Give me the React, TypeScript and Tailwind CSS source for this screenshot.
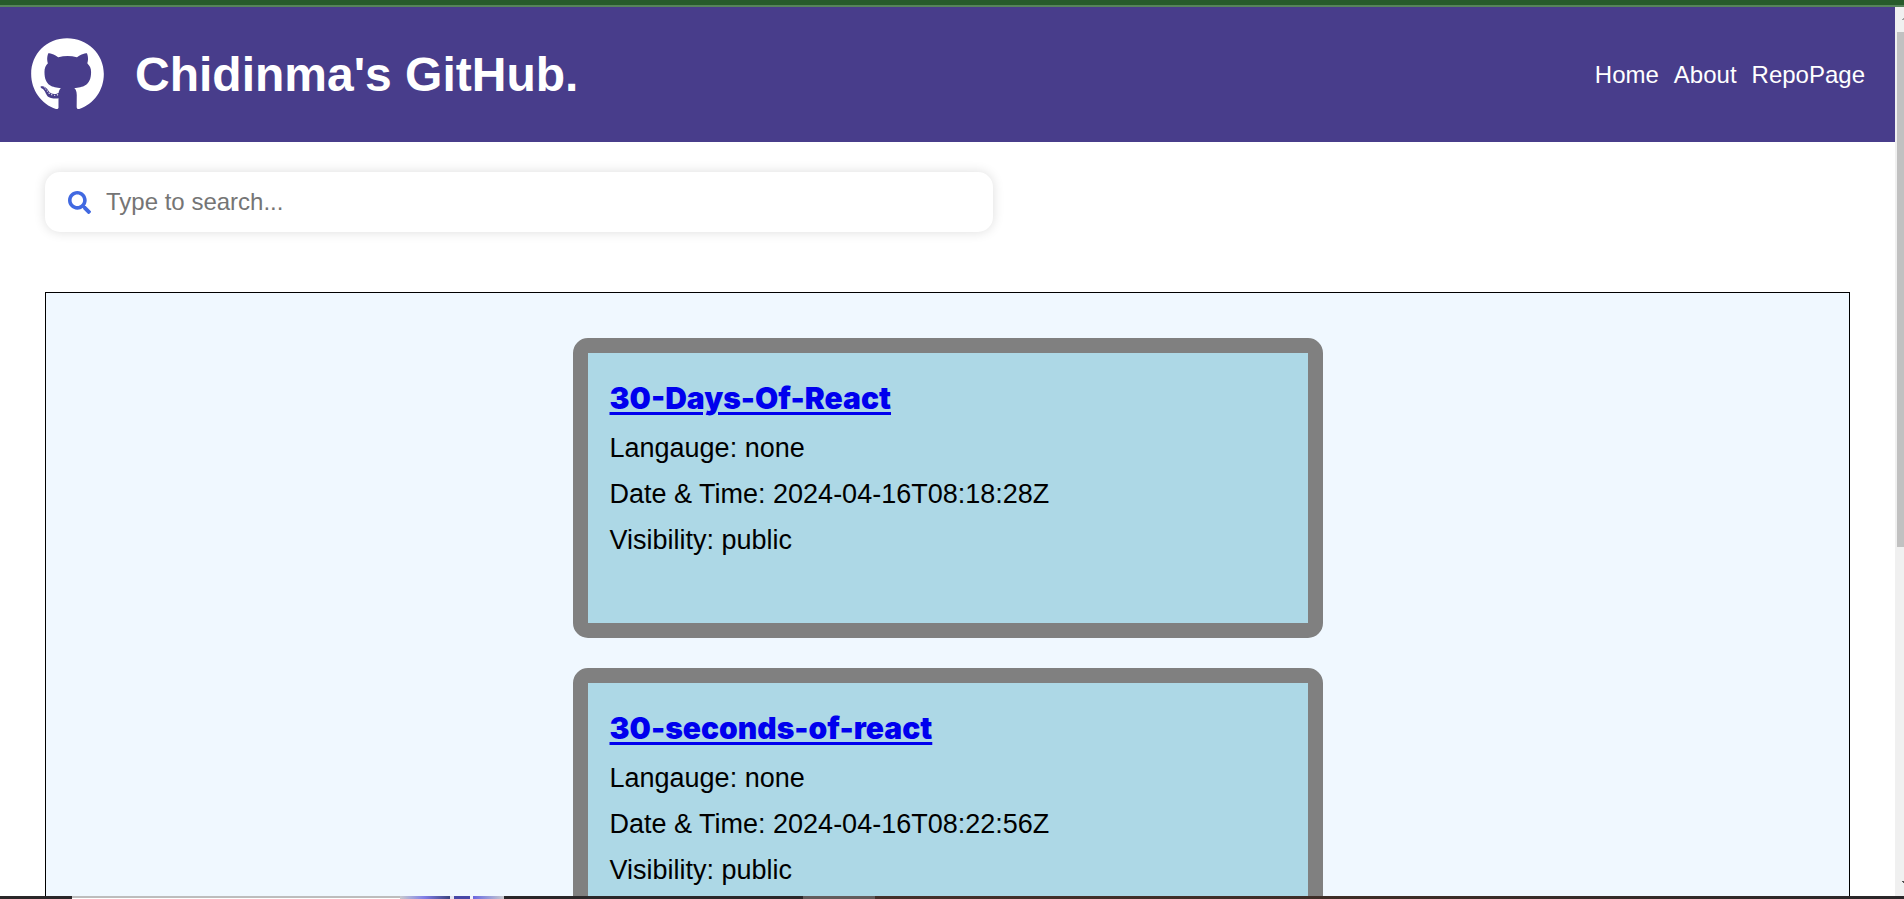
import { FaGithub, FaSearch } from "react-icons/fa";

type Repo = { name: string; language: string; date: string; visibility: string };

const repos: Repo[] = [
  { name: "30-Days-Of-React", language: "none", date: "2024-04-16T08:18:28Z", visibility: "public" },
  { name: "30-seconds-of-react", language: "none", date: "2024-04-16T08:22:56Z", visibility: "public" },
];

const links = ["Home", "About", "RepoPage"];

function Header() {
  return (
    <header className="flex items-center justify-between bg-[#483d8b] p-[30px] text-white">
      <div className="flex items-center gap-[30px]">
        <FaGithub className="size-[75px]" aria-hidden="true" />
        <h1 className="text-[48px] leading-[56px] font-bold">Chidinma's GitHub.</h1>
      </div>
      <nav className="flex gap-[15px] text-2xl">
        {links.map((link) => (
          <a key={link} href={`#${link}`}>
            {link}
          </a>
        ))}
      </nav>
    </header>
  );
}

function SearchBar() {
  return (
    <label className="mx-[45px] mt-[30px] flex h-[60px] w-1/2 items-center gap-[15px] rounded-[15px] bg-white px-[23px] shadow-[0_0_12px_#dddddd]">
      <FaSearch className="size-[23px] shrink-0 text-[#4169e1]" aria-hidden="true" />
      <input
        type="text"
        aria-label="Search"
        placeholder="Type to search..."
        className="min-w-0 flex-1 bg-transparent text-2xl outline-none placeholder:text-[#757575]"
      />
    </label>
  );
}

function RepoCard({ repo }: { repo: Repo }) {
  return (
    <article className="h-[300px] w-full max-w-[750px] shrink-0 rounded-[15px] border-[15px] border-[#808080] bg-[#add8e6] px-[22px] pt-[25px] text-[27px] leading-[31px] text-black">
      <h2 className="mb-[15px] font-['Inter',sans-serif] text-[30px] leading-[40px] font-black">
        <a href="#repo" className="text-[#0000ee] underline decoration-[3px] underline-offset-[3px]">
          {repo.name}
        </a>
      </h2>
      <div className="flex flex-col gap-[15px]">
        <p>Langauge: {repo.language}</p>
        <p>Date &amp; Time: {repo.date}</p>
        <p>Visibility: {repo.visibility}</p>
      </div>
    </article>
  );
}

function ScrollTrack() {
  return (
    <div className="flex w-[9px] shrink-0 flex-col items-end overflow-hidden bg-[#f0f0f0]" aria-hidden="true">
      <div className="flex h-[25px] shrink-0 items-center">
        <svg className="h-[3px] w-[2px]" viewBox="0 0 2 3">
          <path d="M0 1h1V0h1v2H0z" fill="#a3a3a3" />
        </svg>
      </div>
      <div className="h-[515px] w-[7px] bg-[#c1c1c1]" />
      <svg className="mt-auto mb-[13px] h-[2px] w-[2px]" viewBox="0 0 2 2">
        <path d="M0 0h2v2H1V1H0z" fill="#505050" />
      </svg>
    </div>
  );
}

function Taskbar() {
  return (
    <div className="flex h-[3px] shrink-0 bg-[#2a2729]" aria-hidden="true">
      <div className="w-[72px]" />
      <div className="w-[328px] border-t-2 border-[#bdbdbd] bg-white" />
      <div className="w-[50px] bg-linear-to-r from-[#c9c9cc] via-[#7f7ce6] to-[#3c4480]" />
      <div className="w-[4px] bg-[#e6e6f0]" />
      <div className="w-[16px] bg-[#4747a6]" />
      <div className="w-[3px] bg-[#f2f2fa]" />
      <div className="w-[31px] bg-linear-to-r from-[#6b66e0] to-[#c9c9cc]" />
      <div className="w-[299px]" />
      <div className="w-[72px] bg-[#625c5c]" />
      <div className="flex-1 bg-linear-to-r from-[#44302a] via-[#3d2d27] to-[#2a2729]" />
    </div>
  );
}

export default function App() {
  return (
    <div className="flex h-screen flex-col bg-white font-['Liberation_Sans',sans-serif]">
      <div className="h-[7px] shrink-0 border-b-2 border-[#56835a] bg-[#275b2b]" />
      <div className="flex min-h-0 flex-1">
        <div className="min-w-0 flex-1 overflow-y-auto [scrollbar-width:none]">
          <Header />
          <SearchBar />
          <main className="mx-[45px] mt-[60px] flex flex-col items-center gap-[30px] border border-black bg-[#f0f8ff] py-[45px]">
            {repos.map((repo) => (
              <RepoCard key={repo.name} repo={repo} />
            ))}
          </main>
        </div>
        <ScrollTrack />
      </div>
      <Taskbar />
    </div>
  );
}
